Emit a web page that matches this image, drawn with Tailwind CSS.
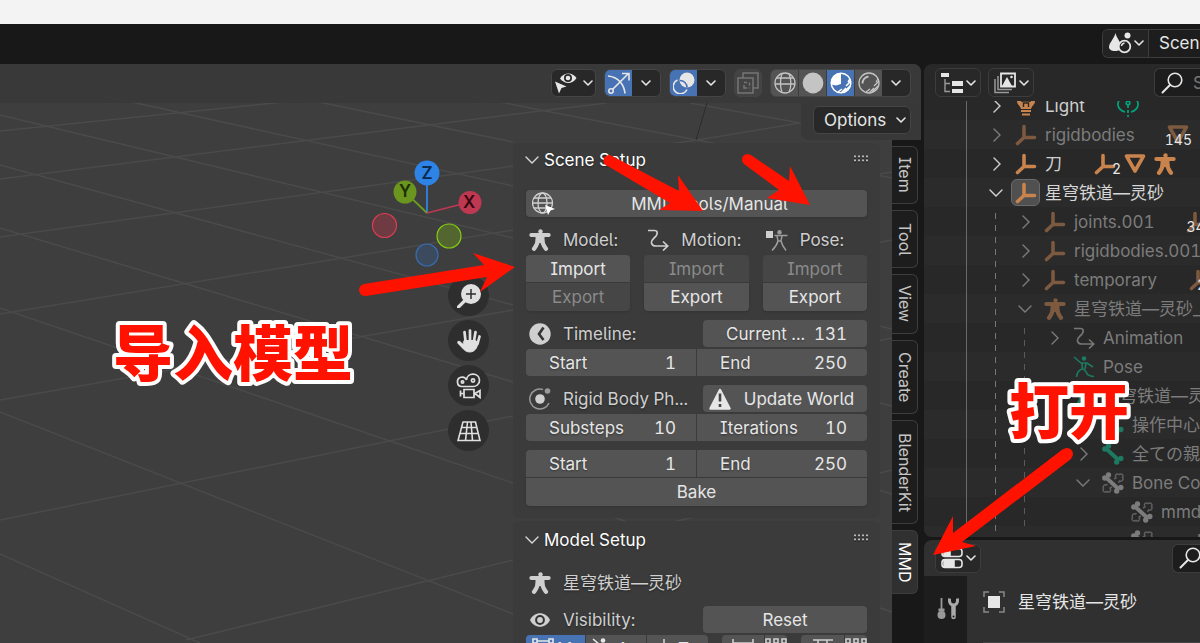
<!DOCTYPE html>
<html lang="zh">
<head>
<meta charset="utf-8">
<title>MMD Tools</title>
<script src="https://cdn.jsdelivr.net/npm/@tailwindcss/browser@4"></script>
</head>
<body class="h-screen overflow-hidden bg-[#181818] font-['Inter','Noto_Sans_CJK_SC',sans-serif] text-[17px] leading-5 text-[#e6e6e6] [font-feature-settings:'cv05','cv08','tnum']">

<svg class="hidden" aria-hidden="true">
  <symbol id="down" viewBox="0 0 10 10"><path d="M1 3l4 4 4-4" fill="none" stroke="currentColor" stroke-width="1.6" stroke-linecap="round" stroke-linejoin="round"/></symbol>
  <symbol id="open" viewBox="0 0 16 16"><path d="M2 5l6 6 6-6" fill="none" stroke="currentColor" stroke-width="1.4" stroke-linecap="round"/></symbol>
  <symbol id="shut" viewBox="0 0 16 16"><path d="M5 2l6 6-6 6" fill="none" stroke="currentColor" stroke-width="1.4" stroke-linecap="round"/></symbol>
  <symbol id="empty" viewBox="0 0 22 22"><path d="M9 2.500v11h10.500M9 13.500L2.500 19.500" fill="none" stroke="currentColor" stroke-width="3.600" stroke-linecap="round" stroke-linejoin="round"/></symbol>
  <symbol id="mesh" viewBox="0 0 22 22"><path d="M2.500 3h17L11 18z" fill="none" stroke="currentColor" stroke-width="3.600" stroke-linejoin="round"/></symbol>
  <symbol id="man" viewBox="0 0 22 22"><circle cx="11.500" cy="2.500" r="2.200" fill="currentColor"/><path d="M2.300 6h17.400" stroke="currentColor" stroke-width="4" stroke-linecap="round"/><path d="M6.500 6h9v8h-9z" fill="currentColor"/><path d="M8.800 11c0 4-1.800 6-3.800 8.800M13.200 11c0 4 1.800 6 3.800 8.800" fill="none" stroke="currentColor" stroke-width="4.200" stroke-linecap="round"/></symbol>
  <symbol id="motion" viewBox="0 0 22 22"><path d="M1 1.500h6.500c3.500 0 3 3.500 1.500 5.500-2 2.500-5 4-4.500 7 .5 2.500 2 3 4.500 3h11M16 12.500l4.700 4.500-4.700 4.500" fill="none" stroke="currentColor" stroke-width="1.700"/></symbol>
  <symbol id="posecube" viewBox="0 0 22 22"><path d="M0 2h7v7H0z" fill="currentColor"/><circle cx="13.500" cy="3.200" r="2.200" fill="currentColor" opacity=".65"/><path d="M8.500 6.500h13M11 6.500l1 5.500c-1 4-3 6.500-6 9.500M16 6.500l-1 5.500c1 4 2.500 6.500 5 9.500M12 12h3" fill="none" stroke="currentColor" stroke-width="1.500" opacity=".65"/></symbol>
  <symbol id="run" viewBox="0 0 22 22"><circle cx="11" cy="2.500" r="2.300" fill="currentColor"/><path d="M1 1l7 6h6l6 4M9 7c0 3 1 4 0 6-3 1-5 4-5.500 8M9.500 13c3 0 4 4 5 5.500 2 1.500 4 2 6.500 2M13 7l-1 6" fill="none" stroke="currentColor" stroke-width="1.600"/></symbol>
  <symbol id="bone" viewBox="0 0 22 22"><path d="M4.500 6l12 11" stroke="currentColor" stroke-width="4"/><g fill="currentColor"><circle cx="2.800" cy="6" r="2.700"/><circle cx="6.500" cy="3" r="2.700"/><circle cx="14.700" cy="19" r="2.700"/><circle cx="18.800" cy="15.500" r="2.700"/></g></symbol>
  <symbol id="bones" viewBox="0 0 22 22"><use href="#bone"/><g fill="none" stroke="currentColor" stroke-width="1.500" opacity=".65"><path d="M12 7l2-1c-1.500-3 .5-5 3-3.500 2.500-1.500 5 .5 3.500 3 1.500 2.500-1 4.500-3 3.500l-1 2"/><path d="M10 15l-2 1c1.500 3-.5 5-3 3.500-2.500 1.500-5-.5-3.500-3-1-2.500 1-4.500 3-3.500l1-1"/></g></symbol>
  <symbol id="search" viewBox="0 0 22 22"><circle cx="14" cy="8" r="6.800" fill="none" stroke="currentColor" stroke-width="1.600"/><path d="M9.200 12.800L1.500 20.500" stroke="currentColor" stroke-width="2" stroke-linecap="round"/></symbol>
  <symbol id="eye" viewBox="0 0 22 16"><path d="M1 8c4-9 16-9 20 0-4 9-16 9-20 0z" fill="currentColor"/><circle cx="11" cy="8" r="4.900" fill="#333"/><circle cx="11" cy="8" r="2.900" fill="currentColor"/></symbol>
  <symbol id="grip" viewBox="0 0 16 8"><path d="M0 1.500h16M0 5.500h16" stroke="#bbb" stroke-width="2" stroke-dasharray="2 2"/><path d="M0 3h16M0 7h16" stroke="#222" stroke-width="1" stroke-dasharray="2 2"/></symbol>
</svg>

<div class="flex h-full flex-col">
  <div class="h-6 shrink-0 bg-[#f3f3f3]"></div>

  <header class="flex h-10 shrink-0 items-center justify-end pb-0.5">
    <div class="flex h-[29px] w-[98px] overflow-hidden rounded-l-md border border-r-0 border-[#3d3d3d] bg-[#1d1d1d]">
      <button class="flex w-[46px] shrink-0 items-center gap-px border-r border-[#3d3d3d] bg-[#232323] pl-1.5" aria-label="Browse scene">
        <svg class="size-6" viewBox="0 0 24 24"><path d="M6.500 2C7.500 7 13 13 12.500 16c-.5 3-3 4-6.500 4s-6-1.500-6-4C0 12 5.500 7 6.500 2z" fill="#e6e6e6"/><circle cx="18.500" cy="4.500" r="3" fill="#e6e6e6"/><circle cx="15.500" cy="15.500" r="5.800" fill="#232323" stroke="#e6e6e6" stroke-width="1.800"/><path d="M12.500 15a3.500 3.500 0 0 1 3-3" fill="none" stroke="#e6e6e6" stroke-width="1.500"/></svg>
        <svg class="size-2.5"><use href="#down"/></svg>
      </button>
      <input class="w-[100px] shrink-0 bg-transparent pl-2.5" value="Scene" aria-label="Scene name">
    </div>
  </header>

  <main class="flex min-h-0 flex-1 gap-[3px]">
    <section class="relative flex min-w-0 flex-1 flex-col overflow-hidden rounded-tr-lg bg-[#3e3e3e]">
      <svg class="absolute left-0 top-0 h-[579px] w-[921px]" viewBox="0 64 921 579" fill="none" stroke="#4a4a4a" stroke-width="1.500" aria-hidden="true">
        <path d="M0 73L513 186M0 115L513 238L892 329M0 165L513 305L892 406M0 228L513 382L892 494M0 308L513 483L892 612M0 412L513 614M0 554L200 643M134 64L513 142M310 64L540 110L697 140L892 178M690 103L800 123L892 140"/>
        <path d="M0 131L255 105L600 70M0 179L540 111L607 103M0 237L513 166L697 140L800 123M0 314L513 230L892 172M0 400L513 310L892 240M0 520L513 416L892 338M186 640L513 560L892 470"/>
        <path d="M707 103L696 140" stroke="#2c2c2c" stroke-width="1"/>
      </svg>

      <div class="relative flex h-[39px] shrink-0 items-center justify-end gap-2 bg-[#383838]/90 pb-0.5 pr-2.5">
        <button class="flex h-7 w-[45px] items-center justify-center gap-1.5 rounded-md border border-[#454545] bg-[#282828]" aria-label="Object types visibility">
          <svg class="size-[22px]" viewBox="0 0 22 22"><path d="M5 6.500c4-7 13-6.500 16.500-.5-4 6.500-12 6.500-16.500.5z" fill="#e6e6e6"/><circle cx="13" cy="6" r="4" fill="#282828"/><circle cx="13" cy="6" r="2.300" fill="#e6e6e6"/><path d="M0 9.500l11.500 5-5 1.500-2.500 5.500z" fill="#e6e6e6"/></svg>
          <svg class="size-2.5"><use href="#down"/></svg>
        </button>
        <div class="flex h-7 overflow-hidden rounded-md border border-[#454545] bg-[#282828]">
          <button class="flex w-[27px] items-center justify-center bg-[#4772b3]" aria-label="Show gizmos"><svg class="size-[22px]" viewBox="0 0 22 22" fill="none" stroke="#e6e6e6" stroke-width="1.600"><path d="M0 4c10 1 16 8 17 17.500M4.500 17.500L20 2M14 1.500h7v7"/><circle cx="3" cy="19" r="2.200"/></svg></button>
          <button class="flex w-7 items-center justify-center" aria-label="Gizmo options"><svg class="size-2.5"><use href="#down"/></svg></button>
        </div>
        <div class="flex h-7 overflow-hidden rounded-md border border-[#454545] bg-[#282828]">
          <button class="flex w-[27px] items-center justify-center bg-[#4772b3]" aria-label="Show overlays"><svg class="size-[22px]" viewBox="0 0 22 22"><circle cx="14" cy="8" r="7.500" fill="#e6e6e6"/><path d="M4.500 8a7.200 7.200 0 1 0 9.500 9.500" fill="none" stroke="#e6e6e6" stroke-width="1.600"/><path d="M7 8.500a7 7 0 0 1 7 7" fill="none" stroke="#4772b3" stroke-width="1.600"/></svg></button>
          <button class="flex w-7 items-center justify-center" aria-label="Overlay options"><svg class="size-2.5"><use href="#down"/></svg></button>
        </div>
        <button class="flex size-7 items-center justify-center rounded-md border border-[#454545] bg-[#434343]" aria-label="Toggle X-ray"><svg class="size-[22px]" viewBox="0 0 22 22" fill="none" stroke="#757575" stroke-width="1.500"><path d="M1 6h15v15H1zM6 6V1h15v15h-5"/><path d="M7 13v3h3M7 10.500h3M12.500 10.500v3M12.500 16h-1"/></svg></button>
        <div class="flex h-7 overflow-hidden rounded-md border border-[#454545] bg-[#545454]">
          <button class="flex w-[27px] items-center justify-center" aria-label="Wireframe"><svg class="size-[22px]" viewBox="0 0 22 22" fill="none" stroke="#c4c4c4" stroke-width="1.300"><circle cx="11" cy="11" r="10"/><path d="M8 1.500c-2 5-2 14 0 19M15 2c2.500 5 2.500 13 0 18M1 12h20M3 6h16"/></svg></button>
          <button class="flex w-7 items-center justify-center border-l border-[#3d3d3d]" aria-label="Solid"><svg class="size-[22px]" viewBox="0 0 22 22"><circle cx="11" cy="11" r="10.400" fill="#c4c4c4"/></svg></button>
          <button class="flex w-7 items-center justify-center border-l border-[#3d3d3d] bg-[#4772b3]" aria-label="Material preview"><svg class="size-[22px]" viewBox="0 0 22 22" fill="none" stroke="#fff"><circle cx="11" cy="11" r="9.800" stroke-width="1.500"/><path d="M11 1v11l-5 1.500-5-1C.5 6 5 1 11 1z" fill="#fff" stroke="none"/><path d="M8 20l4-3M11 21l5-5M14 20l6-6M16 14l5-5M18 10l2-3" stroke-width="1.500"/></svg></button>
          <button class="flex w-7 items-center justify-center border-l border-[#3d3d3d]" aria-label="Rendered"><svg class="size-[22px]" viewBox="0 0 22 22" fill="none" stroke="#c4c4c4" stroke-width="1.300"><circle cx="11" cy="11" r="10"/><path d="M4.500 11.500a7 7 0 0 1 6-7" stroke-width="2"/><path d="M8 20l4-3M11 21l5-5M14 20l6-6M16 14l5-5M18 10l2-3"/></svg></button>
          <button class="flex w-7 items-center justify-center bg-[#282828]" aria-label="Shading options"><svg class="size-2.5"><use href="#down"/></svg></button>
        </div>
      </div>

      <div class="relative flex h-[37px] shrink-0 justify-end">
        <div class="flex w-[120px] justify-center rounded-bl-lg bg-[#383838] pl-0.5 pt-[3px]">
          <button class="flex h-7 w-[98px] items-center justify-between rounded-md border border-[#454545] bg-[#282828] pl-2.5 pr-1">Options<svg class="size-2.5"><use href="#down"/></svg></button>
        </div>
      </div>

      <div class="relative flex min-h-0 flex-1">
        <div class="flex min-w-0 flex-1 flex-col items-end pt-5">
          <svg class="mr-[30px] h-[108px] w-[112px] shrink-0 font-semibold" viewBox="371 160 112 108" font-size="17" text-anchor="middle">
            <g stroke-width="1.800"><path d="M427 213V180" stroke="#2e83e6"/><path d="M427 213l-22-21" stroke="#6b9c1f"/><path d="M427 213l43-11" stroke="#bd3850"/></g>
            <circle cx="384.500" cy="225.500" r="12" fill="#6e3b43" stroke="#dd3c55" stroke-width="1.200"/>
            <circle cx="449" cy="236" r="12" fill="#536630" stroke="#85cd14" stroke-width="1.200"/>
            <circle cx="427" cy="255" r="11" fill="#3c4a5d" stroke="#386cb0" stroke-width="1.200"/>
            <circle cx="427" cy="173" r="12.500" fill="#2e83e6"/><circle cx="405" cy="192" r="11.500" fill="#6a961f"/><circle cx="470" cy="202.500" r="11.500" fill="#bd3850"/>
            <text x="427" y="179" fill="#0b2a4c">Z</text><text x="405" y="197" fill="#1f2f04">Y</text><text x="469" y="208" fill="#38070f">X</text>
          </svg>
          <div class="mr-6 mt-[7px] flex flex-col gap-1">
            <button class="flex size-[41px] shrink-0 items-center justify-center rounded-full bg-[#2e2e2e]" aria-label="Zoom"><svg class="size-6" viewBox="0 0 24 24"><circle cx="14" cy="10" r="10" fill="#e0e0e0"/><path d="M7.500 17L1.500 23" stroke="#e0e0e0" stroke-width="3.200" stroke-linecap="round"/><path d="M14 5v10M9 10h10" stroke="#2e2e2e" stroke-width="1.500"/></svg></button>
            <button class="flex size-[41px] shrink-0 items-center justify-center rounded-full bg-[#2e2e2e]" aria-label="Pan"><svg class="size-6" viewBox="0 0 24 24" stroke="#e0e0e0" stroke-linecap="round"><path d="M8.500 12L7.500 3M13 12V1.500M17 12l1.500-9M20.500 15l2-7.500" stroke-width="2.700"/><path d="M2 13.500l5 5" stroke-width="3.400"/><path d="M7.500 11.500h11l2.500 2c-1 6-3 9-8 9.500-4 0-6-2-8-5z" fill="#e0e0e0"/></svg></button>
            <button class="flex size-[41px] shrink-0 items-center justify-center rounded-full bg-[#2e2e2e]" aria-label="Camera view"><svg class="size-[26px]" viewBox="0 0 26 26" fill="none" stroke="#e0e0e0" stroke-width="1.700"><path d="M6 13.500a4.700 4.700 0 1 1 4.500-6.500c.5-8 12.500-7.500 13 0 .2 4-3 6.500-6.500 6.500z"/><circle cx="6.500" cy="9" r="1.200"/><circle cx="17" cy="7.500" r="1.600"/><path d="M8 16.500h10v8H8zM19 20.500l5-3v7zM4.500 17.500v6M4.500 20.500H8"/></svg></button>
            <button class="flex size-[41px] shrink-0 items-center justify-center rounded-full bg-[#2e2e2e]" aria-label="Perspective"><svg class="size-6" viewBox="0 0 24 24" fill="none" stroke="#e0e0e0" stroke-width="1.600"><path d="M6 3h12.500L23 21.500H1zM4.700 8.500h15M3 14.500h18M10.500 3L8.500 21.500M14 3l1.500 18.500"/></svg></button>
          </div>
        </div>

        <div class="mt-[3px] flex w-[367px] shrink-0 flex-col gap-[3px] [text-shadow:0_1px_2px_#0006]">
          <section class="rounded-md bg-[#3b3b3b] px-[13px] pb-3">
            <h2 class="flex h-[34px] items-center text-white"><svg class="-ml-0.5 mr-1 h-4 w-4 text-[#d8d8d8]"><use href="#open"/></svg>Scene Setup<svg class="mb-0.5 ml-auto mr-[-3px] h-2 w-4"><use href="#grip"/></svg></h2>
            <button class="mt-[13px] flex h-[27px] w-full items-center rounded bg-[#545454] pl-1.5 shadow-sm">
              <svg class="size-6 shrink-0" viewBox="0 0 24 24" fill="none" stroke="#cfcfcf" stroke-width="1.300"><circle cx="10.500" cy="11" r="10"/><ellipse cx="10.500" cy="11" rx="4.500" ry="10"/><path d="M.5 11h20M2 6h17M2 16h17"/><path d="M13 13l10 4-4.500 1.500L16 23z" fill="#fff" stroke="none"/></svg>
              <span class="flex-1 pr-1">MMD Tools/Manual</span>
            </button>
            <div class="mt-2 grid grid-cols-3 gap-x-3.5 text-[#cfcfcf]">
              <div><div class="flex h-[30px] items-center gap-3 pl-[3px]"><svg class="size-[22px]"><use href="#man"/></svg>Model:</div>
                <button class="h-[27px] w-full rounded-t bg-[#545454] text-[#e6e6e6]">Import</button><button disabled class="mt-px block h-7 w-full rounded-b bg-[#464646] text-[#8a8a8a] shadow-sm">Export</button></div>
              <div><div class="flex h-[30px] items-center gap-3 pl-[3px]"><svg class="size-[22px]"><use href="#motion"/></svg>Motion:</div>
                <button disabled class="h-[27px] w-full rounded-t bg-[#464646] text-[#8a8a8a]">Import</button><button class="mt-px block h-7 w-full rounded-b bg-[#545454] text-[#e6e6e6] shadow-sm">Export</button></div>
              <div><div class="flex h-[30px] items-center gap-3 pl-[3px]"><svg class="size-[22px]"><use href="#posecube"/></svg>Pose:</div>
                <button disabled class="h-[27px] w-full rounded-t bg-[#464646] text-[#8a8a8a]">Import</button><button class="mt-px block h-7 w-full rounded-b bg-[#545454] text-[#e6e6e6] shadow-sm">Export</button></div>
            </div>
            <div class="mt-[9px] flex h-[27px] items-center text-[#cfcfcf]">
              <svg class="ml-[3px] mr-3 size-[22px]" viewBox="0 0 22 22"><circle cx="11" cy="11" r="10.700" fill="#cfcfcf"/><path d="M14.500 4.500L10 11l4.500 6" fill="none" stroke="#333" stroke-width="2.600"/></svg>Timeline:
              <div class="ml-auto flex h-full w-[164px] items-center rounded bg-[#545454] pl-[23px] pr-5 text-[#e6e6e6]"><label for="cur" class="whitespace-nowrap">Current ...</label><input id="cur" class="w-0 min-w-0 flex-1 bg-transparent text-right" value="131"></div>
            </div>
            <div class="mt-0.5 grid grid-cols-2 gap-px">
              <div class="flex h-[27px] items-center rounded-l bg-[#545454] pl-[23px] pr-5"><label for="s1">Start</label><input id="s1" class="w-0 flex-1 bg-transparent text-right" value="1"></div>
              <div class="flex h-[27px] items-center rounded-r bg-[#545454] pl-[23px] pr-5"><label for="e1">End</label><input id="e1" class="w-0 flex-1 bg-transparent text-right" value="250"></div>
            </div>
            <div class="mt-[9px] flex h-[27px] items-center text-[#cfcfcf]">
              <svg class="ml-[3px] mr-3 size-[22px]" viewBox="0 0 22 22"><circle cx="11" cy="11" r="4.800" fill="#cfcfcf"/><circle cx="18.500" cy="3" r="2.800" fill="#999"/><path d="M14 1.500A10 10 0 1 0 20 15" fill="none" stroke="#999" stroke-width="1.500"/></svg>Rigid Body Ph...
              <button class="ml-auto flex h-full w-[164px] items-center rounded bg-[#545454] pl-1.5 text-[#e6e6e6]"><svg class="size-[22px]" viewBox="0 0 22 22"><path d="M11 2l9.500 18.500h-19z" fill="#e6e6e6" stroke="#e6e6e6" stroke-width="2.500" stroke-linejoin="round"/><path d="M11 5.500v8M11 16v3" stroke="#444" stroke-width="2.600"/></svg><span class="flex-1">Update World</span></button>
            </div>
            <div class="mt-0.5 grid grid-cols-2 gap-px">
              <div class="flex h-[27px] items-center rounded-l bg-[#545454] pl-[23px] pr-5"><label for="sub">Substeps</label><input id="sub" class="w-0 flex-1 bg-transparent text-right" value="10"></div>
              <div class="flex h-[27px] items-center rounded-r bg-[#545454] pl-[23px] pr-5"><label for="it">Iterations</label><input id="it" class="w-0 flex-1 bg-transparent text-right" value="10"></div>
            </div>
            <div class="mt-[9px] grid grid-cols-2 gap-px">
              <div class="flex h-[27px] items-center rounded-tl bg-[#545454] pl-[23px] pr-5"><label for="s2">Start</label><input id="s2" class="w-0 flex-1 bg-transparent text-right" value="1"></div>
              <div class="flex h-[27px] items-center rounded-tr bg-[#545454] pl-[23px] pr-5"><label for="e2">End</label><input id="e2" class="w-0 flex-1 bg-transparent text-right" value="250"></div>
              <button class="col-span-2 h-7 rounded-b bg-[#545454] shadow-sm">Bake</button>
            </div>
          </section>

          <section class="rounded-t-md bg-[#3b3b3b] px-[13px]">
            <h2 class="flex h-[38px] items-center text-white"><svg class="-ml-0.5 mr-1 h-4 w-4 text-[#d8d8d8]"><use href="#open"/></svg>Model Setup<svg class="mb-1 ml-auto mr-[-3px] h-2 w-4"><use href="#grip"/></svg></h2>
            <div class="mt-2 flex h-8 items-center text-[#cfcfcf]"><svg class="ml-[3px] mr-3 size-[22px]"><use href="#man"/></svg>星穹铁道—灵砂</div>
            <div class="mt-[7px] flex h-[27px] items-center text-[#cfcfcf]"><svg class="ml-[3px] mr-3 h-4 w-[22px]"><use href="#eye"/></svg>Visibility:<button class="ml-auto h-full w-[164px] rounded bg-[#545454] text-[#e6e6e6]">Reset</button></div>
            <div class="mt-0.5 flex h-[27px] gap-3.5">
              <div class="grid w-[182px] grid-cols-[59px_60px_61px] gap-px overflow-hidden rounded">
                <button class="flex min-w-0 items-center gap-[3px] overflow-hidden bg-[#4772b3] pl-1.5"><svg class="size-[22px] shrink-0" viewBox="0 0 22 22" fill="none" stroke="#e6e6e6" stroke-width="1.600"><path d="M1 1h4v4H1zM17 1h4v4h-4zM5 3h12M5 5l-2 14M17 5l2 14M7 6h8"/></svg>M...</button>
                <button class="flex min-w-0 items-center gap-[3px] overflow-hidden bg-[#545454] pl-1.5"><svg class="size-[22px] shrink-0"><use href="#run"/></svg>A...</button>
                <button class="flex min-w-0 items-center gap-[3px] overflow-hidden bg-[#545454] pl-1.5"><svg class="size-[22px] shrink-0" viewBox="0 0 22 22"><path d="M11 1v20M1 11h20" stroke="#cfcfcf" stroke-width="1.600"/></svg>T...</button>
              </div>
              <div class="grid w-[65px] grid-cols-[2fr_1fr] gap-px overflow-hidden rounded">
                <button class="flex items-center justify-center bg-[#545454]" aria-label="Rigid bodies"><svg class="size-[22px]" viewBox="0 0 22 22"><path d="M1 1v20M21 1v20M1 5h20" stroke="#cfcfcf" stroke-width="1.600"/></svg></button>
                <button class="flex items-center justify-center bg-[#545454]" aria-label="Names"><svg class="size-[22px]" viewBox="0 0 22 22" fill="none" stroke="#cfcfcf" stroke-width="1.600"><path d="M1 1h4v4H1zM9 1h4v4H9zM17 1h4v4h-4zM5 5l-2 12M17 5l-2 12"/></svg></button>
              </div>
              <div class="grid flex-1 grid-cols-[2fr_1fr] gap-px overflow-hidden rounded">
                <button class="flex items-center justify-center bg-[#545454]" aria-label="Joints"><svg class="size-[22px]" viewBox="0 0 22 22"><path d="M1 2h20M6 2v19M15 2v19M1 8h20" stroke="#cfcfcf" stroke-width="1.600"/></svg></button>
                <button class="flex items-center justify-center bg-[#545454]" aria-label="Joint names"><svg class="size-[22px]" viewBox="0 0 22 22" fill="none" stroke="#cfcfcf" stroke-width="1.600"><path d="M1 1h4v4H1zM9 1h4v4H9zM17 1h4v4h-4zM5 5l-2 12M17 5l-2 12"/></svg></button>
              </div>
            </div>
          </section>
        </div>

        <nav class="ml-3 flex w-[29px] shrink-0 flex-col items-start gap-1.5 bg-[#181818] pt-1.5 text-base text-[#c4c4c4]">
          <button class="flex h-[58px] w-[26px] items-center justify-center rounded-r-md border border-l-0 border-[#3d3d3d] bg-[#1d1d1d] [writing-mode:vertical-rl]">Item</button>
          <button class="flex h-[58px] w-[26px] items-center justify-center rounded-r-md border border-l-0 border-[#3d3d3d] bg-[#1d1d1d] [writing-mode:vertical-rl]">Tool</button>
          <button class="flex h-[60px] w-[26px] items-center justify-center rounded-r-md border border-l-0 border-[#3d3d3d] bg-[#1d1d1d] [writing-mode:vertical-rl]">View</button>
          <button class="flex h-[74px] w-[26px] items-center justify-center rounded-r-md border border-l-0 border-[#3d3d3d] bg-[#1d1d1d] [writing-mode:vertical-rl]">Create</button>
          <button class="flex h-[104px] w-[26px] items-center justify-center rounded-r-md border border-l-0 border-[#3d3d3d] bg-[#1d1d1d] [writing-mode:vertical-rl]">BlenderKit</button>
          <button class="flex h-16 w-[26px] items-center justify-center rounded-r-md border border-l-0 border-[#3d3d3d] bg-[#303030] text-white [writing-mode:vertical-rl]">MMD</button>
        </nav>
      </div>
    </section>

    <aside class="flex w-[276px] shrink-0 flex-col gap-[3px]">
      <section class="flex min-h-0 flex-1 flex-col overflow-hidden rounded-l-lg bg-[#282828]">
        <div class="flex h-[37px] shrink-0 items-center gap-[7px] pl-[11px]">
          <button class="flex h-[29px] w-[46px] items-center justify-center gap-0.5 rounded-md border border-[#3d3d3d]" aria-label="Editor type: Outliner"><svg class="h-[22px] w-6" viewBox="0 0 24 22"><path d="M1 1h8v4H1zM12 9h11v5H12zM12 17h11v4H12z" fill="#e6e6e6"/><path d="M5 7v12.500h5M5 11.500h5" fill="none" stroke="#999" stroke-width="1.400"/></svg><svg class="size-2.5"><use href="#down"/></svg></button>
          <button class="flex h-[29px] w-[46px] items-center justify-center gap-0.5 rounded-md border border-[#3d3d3d]" aria-label="Display mode"><svg class="h-[22px] w-6" viewBox="0 0 24 22"><path d="M8 1.500h14v13H8z" fill="none" stroke="#e6e6e6" stroke-width="1.800"/><path d="M9 14l5-9 5 9z" fill="#e6e6e6"/><circle cx="18.500" cy="5" r="1.300" fill="#e6e6e6"/><path d="M5 4v13.500h14M2 7v13.500h14" fill="none" stroke="#999" stroke-width="1.500"/></svg><svg class="size-2.5"><use href="#down"/></svg></button>
          <div class="ml-auto flex h-[29px] w-[46px] items-center overflow-hidden rounded-l-md border border-r-0 border-[#3d3d3d] bg-[#1d1d1d] pl-1.5"><svg class="mr-2.5 size-[22px] shrink-0"><use href="#search"/></svg><input class="w-20 shrink-0 bg-transparent placeholder:text-[#777]" placeholder="Search" aria-label="Search outliner"></div>
        </div>
        <div class="relative min-h-0 flex-1 overflow-hidden">
          <ul class="-mt-2.5 whitespace-nowrap text-[#7c7c7c] [&>li]:flex [&>li]:h-[29px] [&>li]:items-center [&>li>*]:shrink-0 [&>li:nth-child(even)]:bg-[#2b2b2b]">
            <li class="pl-[65px] text-[#cfcfcf]"><svg class="mr-2.5 size-4"><use href="#shut"/></svg><svg class="mr-2 size-[22px] text-[#c9834c]" viewBox="0 0 22 22"><path d="M2 6a9 7 0 0 1 18 0c0 4-3 4-4 8H6c-1-4-4-4-4-8z" fill="currentColor"/><path d="M7 7v-1h8v1M8.500 12V8h5v4" fill="none" stroke="#282828" stroke-width="1.400"/><path d="M6 16h10M7 19.500h8" stroke="currentColor" stroke-width="1.800"/></svg>Light<svg class="ml-8 size-[22px] text-[#00a37a]" viewBox="0 0 22 22" fill="none" stroke="currentColor" stroke-width="1.700"><path d="M3 4c-4 5-2 11 5 13M19 4c4 5 2 11-5 13"/><circle cx="11" cy="8" r="1.800"/><path d="M11 10v12" stroke-dasharray="3 2"/></svg></li>
            <li class="pl-[65px]"><svg class="mr-2.5 size-4"><use href="#shut"/></svg><svg class="mr-2 size-[22px] text-[#7c593f]"><use href="#empty"/></svg>rigidbodies<span class="relative ml-8 size-[22px]"><svg class="size-[22px] text-[#7c593f]"><use href="#mesh"/></svg><span class="absolute -left-0.5 top-1.5 text-sm text-[#e6e6e6]">145</span></span></li>
            <li class="pl-[65px] text-[#cfcfcf]"><svg class="mr-2.5 size-4"><use href="#shut"/></svg><svg class="mr-2 size-[22px] text-[#c9834c]"><use href="#empty"/></svg>刀<span class="relative ml-8 flex gap-2 text-[#c9834c]"><svg class="size-[22px]"><use href="#empty"/></svg><svg class="size-[22px]"><use href="#mesh"/></svg><svg class="size-[22px]"><use href="#man"/></svg><span class="absolute left-[18px] top-1.5 text-sm text-[#e6e6e6]">2</span></span></li>
            <li class="pl-16 text-[#d6d6d6]"><svg class="mr-[7px] size-4"><use href="#open"/></svg><span class="mr-[5px] flex h-[27px] w-[29px] items-center justify-center rounded-md border border-[#6a6a6a] bg-[#505050]"><svg class="size-[22px] text-[#c9834c]"><use href="#empty"/></svg></span>星穹铁道—灵砂</li>
            <li class="pl-[94px]"><svg class="mr-2.5 size-4"><use href="#shut"/></svg><svg class="mr-2 size-[22px] text-[#7c593f]"><use href="#empty"/></svg>joints.001<span class="relative ml-8 size-[22px]"><svg class="size-[22px] text-[#7c593f]"><use href="#empty"/></svg><span class="absolute left-0 top-1.5 text-sm text-[#e6e6e6]">34</span></span></li>
            <li class="pl-[94px]"><svg class="mr-2.5 size-4"><use href="#shut"/></svg><svg class="mr-2 size-[22px] text-[#7c593f]"><use href="#empty"/></svg>rigidbodies.001</li>
            <li class="pl-[94px]"><svg class="mr-2.5 size-4"><use href="#shut"/></svg><svg class="mr-2 size-[22px] text-[#7c593f]"><use href="#empty"/></svg>temporary<span class="relative ml-8 size-[22px]"><svg class="size-[22px] text-[#7c593f]"><use href="#empty"/></svg><span class="absolute left-2 top-1.5 text-sm text-[#e6e6e6]">2</span></span></li>
            <li class="pl-[93px]"><svg class="mr-[11px] size-4"><use href="#open"/></svg><svg class="mr-2 size-[22px] text-[#7c593f]"><use href="#man"/></svg>星穹铁道—灵砂_arm</li>
            <li class="pl-[123px]"><svg class="mr-2.5 size-4"><use href="#shut"/></svg><svg class="mr-2 size-[22px] text-[#777]"><use href="#motion"/></svg>Animation</li>
            <li class="pl-[149px]"><svg class="mr-2 size-[22px] text-[#1d7a60]"><use href="#run"/></svg>Pose</li>
            <li class="pl-[149px]"><svg class="mr-2 size-[22px] text-[#1d7a60]"><use href="#man"/></svg>星穹铁道—灵砂</li>
            <li class="pl-[178px]"><svg class="mr-2 size-[22px] text-[#1d7a60]"><use href="#bone"/></svg>操作中心</li>
            <li class="pl-[152px]"><svg class="mr-2.5 size-4"><use href="#shut"/></svg><svg class="mr-2 size-[22px] text-[#1d7a60]"><use href="#bone"/></svg>全ての親</li>
            <li class="pl-[151px]"><svg class="mr-[11px] size-4"><use href="#open"/></svg><svg class="mr-2 size-[22px]"><use href="#bones"/></svg>Bone Collections</li>
            <li class="pl-[207px]"><svg class="mr-2 size-[22px]"><use href="#bones"/></svg>mmd_shadow</li>
            <li class="pl-[207px]"><svg class="mr-2 size-[22px]"><use href="#bones"/></svg>mmd_dummy</li>
          </ul>
          <div class="absolute bottom-3 left-[42px] top-0 border-l border-[#6a6a6a]"></div>
          <svg class="absolute left-[71px] top-[111px] h-80 w-8" viewBox="0 0 32 320"><path d="M.5 1V320" stroke="#777" stroke-dasharray="6 6"/><path d="M29.500 116V320" stroke="#5a5a5a" stroke-dasharray="6 6"/></svg>
        </div>
      </section>

      <section class="flex h-[103px] shrink-0 flex-col overflow-hidden rounded-tl-lg bg-[#303030]">
        <div class="flex h-9 shrink-0 items-center pl-[11px]">
          <button class="flex h-[29px] w-[46px] items-center justify-center gap-0.5 rounded-md border border-[#3d3d3d] bg-[#282828]" aria-label="Editor type: Properties"><svg class="h-[22px] w-6" viewBox="0 0 24 22" stroke="#e6e6e6" stroke-width="1.600"><rect x="2" y="1.500" width="20" height="8" rx="3" fill="none"/><rect x="2" y="12.500" width="20" height="8" rx="3" fill="none"/><path d="M4 2h6v7H4zM4 13h10v7H4z" fill="#e6e6e6"/></svg><svg class="size-2.5"><use href="#down"/></svg></button>
          <div class="ml-auto flex h-[29px] w-7 items-center overflow-hidden rounded-l-md border border-r-0 border-[#3d3d3d] bg-[#1d1d1d] pl-1.5"><svg class="mr-2.5 size-[22px] shrink-0"><use href="#search"/></svg><input class="w-20 shrink-0 bg-transparent" aria-label="Search properties"></div>
        </div>
        <div class="flex min-h-0 flex-1">
          <nav class="w-[43px] bg-[#1d1d1d] pl-3 pt-5"><button aria-label="Tool"><svg class="size-6" viewBox="0 0 24 24"><path d="M5.500 2v12" stroke="#999" stroke-width="1.800"/><circle cx="5.500" cy="19" r="4" fill="#999"/><path d="M2.500 12.500h6v3h-6z" fill="#999"/><path d="M17.500 10v11" stroke="#aaa" stroke-width="4.500" stroke-linecap="round"/><path d="M13.500 2.500c-.5 5 1.500 6.500 4 6.500s4.500-1.500 4-6.500" fill="none" stroke="#aaa" stroke-width="3"/><circle cx="17.500" cy="20.500" r="1" fill="#1d1d1d"/></svg></button></nav>
          <div class="flex flex-1 flex-col justify-between pl-4">
            <div class="flex h-[52px] items-center gap-[13px]"><svg class="size-[22px]" viewBox="0 0 22 22"><path d="M5 5h12v12H5z" fill="#e6e6e6"/><path d="M1 6V1h5M16 1h5v5M21 16v5h-5M6 21H1v-5" fill="none" stroke="#888" stroke-width="1.500"/></svg>星穹铁道—灵砂</div>
            <div class="border-t border-[#454545]"></div>
          </div>
        </div>
      </section>
    </aside>
  </main>
</div>

<svg class="pointer-events-none absolute left-0 top-0 h-[643px] w-[1200px] font-['Noto_Sans_CJK_SC',sans-serif] font-black" viewBox="0 0 1200 643" fill="#ff1200" aria-label="Tutorial notes">
  <path d="M612 156L679 191L678 175L703 211L659 210L670 203L606 165z"/><circle cx="609" cy="160.500" r="5.500"/>
  <path d="M751 155L789 181L790 166L810 205L767 198L779 190L744 164z"/><circle cx="747.500" cy="159.500" r="5.500"/>
  <path d="M364 284L484 265L473 253L515 267L480 292L487 277L366 296z"/><circle cx="365" cy="290" r="6"/>
  <path d="M1063 449L953 533L953 516L933 555L976 546L962 542L1071 459z"/><circle cx="1067" cy="454" r="6"/>
  <g font-size="60" stroke="#fff" stroke-width="8" stroke-linejoin="round" paint-order="stroke"><text x="113" y="376">导入模型</text><text x="1009" y="434">打开</text></g>
</svg>
</body>
</html>
